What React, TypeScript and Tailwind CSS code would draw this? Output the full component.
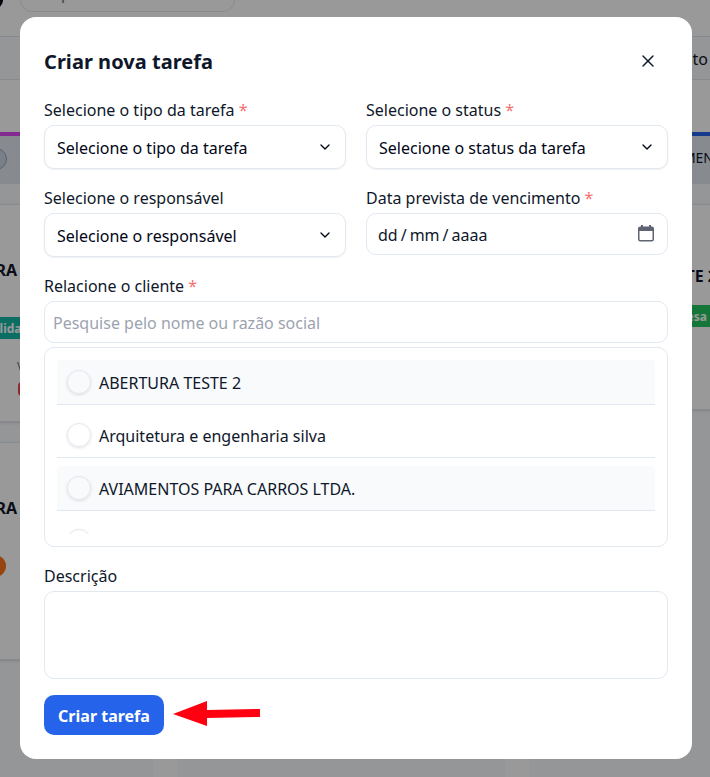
import React from "react";
import { X, ChevronDown } from "lucide-react";

const Label = ({ children, required }: { children: React.ReactNode; required?: boolean }) => (
  <label className="mb-[3px] block h-6 text-base leading-6 text-[#0f172a]">
    {children}
    {required && <span className="text-[#f87171]"> *</span>}
  </label>
);

const SelectBox = ({ text }: { text: string }) => (
  <button className="flex h-11 w-full items-center justify-between rounded-[10px] border border-[#e2e8f0] bg-white px-3 text-base text-[#020617] shadow-[0_1px_2px_rgba(0,0,0,0.06)]">
    <span className="pt-0.5">{text}</span>
    <ChevronDown className="h-4 w-4 text-[#020617]" strokeWidth={2} />
  </button>
);

const CalendarIcon = () => (
  <svg width="16" height="17" viewBox="0 0 16 17" className="mb-0.5 mr-[5px]">
    <rect x="3" y="0" width="2" height="3" fill="#5f6473" />
    <rect x="11" y="0" width="2" height="3" fill="#5f6473" />
    <rect x="0.75" y="2.25" width="14.5" height="13.5" rx="1.5" fill="none" stroke="#5f6473" strokeWidth="1.5" />
    <rect x="0.5" y="2" width="15" height="4" rx="1" fill="#5f6473" />
  </svg>
);

const Client = ({ name, shaded }: { name: string; shaded?: boolean }) => (
  <div className={`mb-2 flex h-[45px] shrink-0 items-center gap-2 rounded-t border-b border-[#e2e8f0] pl-2.5 ${shaded ? "bg-[#f8fafc]" : "bg-white"}`}>
    <span className="h-6 w-6 rounded-full border border-[#e2e8f0] shadow-[0_1px_3px_rgba(0,0,0,0.12)]" />
    <span className="pt-0.5 text-base leading-6 text-[#0f172a]">{name}</span>
  </div>
);

const Board = () => (
  <div className="h-screen overflow-hidden bg-white">
    <div className="flex h-9 items-start">
      <div className="-mt-2 -ml-3 h-4 w-[15px] shrink-0 rounded-full bg-[#020617]" />
      <div className="-mt-7 ml-[17px] flex h-10 w-[215px] items-end rounded-xl border border-[#e2e8f0] pb-1.5 pl-2 text-base leading-6 text-[#64748b]">
        Pesquisar
      </div>
    </div>
    <div className="flex h-11 items-center justify-end border-y border-[#e2e8f0] bg-[#f8fafc] pt-0.5 pr-0.5 text-base text-[#0f172a]">
      Vencimento
    </div>
    <div className="-ml-[175px] mt-[52px] flex h-[645px] w-[1032px] gap-6">
      <div className="w-[328px] shrink-0 bg-[#f8fafc]">
        <div className="flex h-[52px] items-center justify-end border-t-4 border-[#d946ef] bg-[#e2e8f0] pr-[146px]">
          <span className="-mt-0.5 h-[22px] w-[22px] rounded-full border border-[#94a3b8] bg-[#cbd5e1]" />
        </div>
        <div className="mt-5 h-[218px] border border-[#e2e8f0] bg-white pt-[53px] pr-[134px] shadow-sm">
          <div className="pr-px text-right text-base leading-6 font-bold text-[#0f172a]">EMPRESA ABERTURA</div>
          <div className="mt-[35px] -mr-3 flex h-[22px] items-center bg-[#14b8a6] pt-0.5 pl-[140px] text-xs font-bold text-white">Modalidade</div>
          <div className="mt-[20px] -mr-[14px] pl-[191px] text-xs leading-4 text-[#64748b]">Ve</div>
          <div className="mt-[7px] -mr-[16px] ml-auto h-[14px] w-4 rounded-sm border-2 border-[#ef4444] bg-[#f87171]" />
        </div>
        <div className="mt-[20px] h-[218px] border border-[#e2e8f0] bg-white pt-[53px] pr-[134px] shadow-sm">
          <div className="pr-px text-right text-base leading-6 font-bold text-[#0f172a]">EMPRESA ABERTURA</div>
          <div className="mt-[35px] mr-[12px] ml-auto h-[22px] w-20 rounded-full bg-[#f97316]" />
        </div>
      </div>
      <div className="w-[328px] shrink-0 bg-[#f8fafc]" />
      <div className="w-[328px] shrink-0 bg-[#f8fafc]">
        <div className="flex h-[52px] items-center border-t-4 border-[#2563eb] bg-[#e2e8f0] pb-1 pl-[83px] text-sm text-[#0f172a]">
          <span className="w-[102px] text-right">ANDAMEN</span>
        </div>
        <div className="mt-5 h-[206px] border border-[#e2e8f0] bg-white pt-[59px] shadow-sm">
          <div className="w-[187px] text-right text-base leading-6 font-bold whitespace-nowrap text-[#0f172a]">ABERTURA TESTE 2</div>
          <div className="mt-[17px] ml-[90px] flex h-[22px] w-[100px] items-center justify-end bg-[#22c55e] pt-px pr-[13px] text-xs font-bold text-white">Empresa</div>
        </div>
      </div>
    </div>
  </div>
);

export default function App() {
  return (
    <div className="h-screen overflow-hidden font-['Noto_Sans',sans-serif]">
      <Board />
      <div className="fixed inset-0 bg-black/40 pt-[17px] pl-5">
        <div className="flex h-[742px] w-[672px] flex-col rounded-2xl bg-white p-6">
          <div className="flex h-10 items-center justify-between">
            <h2 className="pt-0.5 text-xl leading-7 font-bold tracking-[0.04px] text-[#0f172a]">Criar nova tarefa</h2>
            <X className="mr-[10px] h-5 w-5 text-[#0f172a]" strokeWidth={1.7} />
          </div>
          <div className="mt-[17px] grid grid-cols-2 gap-x-5 gap-y-[17px]">
            <div>
              <Label required>Selecione o tipo da tarefa</Label>
              <SelectBox text="Selecione o tipo da tarefa" />
            </div>
            <div>
              <Label required>Selecione o status</Label>
              <SelectBox text="Selecione o status da tarefa" />
            </div>
            <div>
              <Label>Selecione o responsável</Label>
              <SelectBox text="Selecione o responsável" />
            </div>
            <div>
              <Label required>Data prevista de vencimento</Label>
              <div className="flex h-[42px] items-center justify-between rounded-[10px] border border-[#e2e8f0] px-2 pl-[11px] text-base text-[#0f172a]">
                <span className="flex gap-[3px] pt-0.5"><span>dd</span><span>/</span><span>mm</span><span>/</span><span>aaaa</span></span>
                <CalendarIcon />
              </div>
            </div>
          </div>
          <div className="mt-[17px]">
            <Label required>Relacione o cliente</Label>
            <input
              className="block h-[42px] w-full rounded-[10px] border border-[#e2e8f0] px-2 pt-0.5 text-base placeholder:text-[#9ca3af]"
              placeholder="Pesquise pelo nome ou razão social"
            />
            <div className="mt-1 h-[200px] rounded-[10px] border border-[#e2e8f0] p-3">
              <div className="flex h-[174px] flex-col overflow-hidden">
                <Client name="ABERTURA TESTE 2" shaded />
                <Client name="Arquitetura e engenharia silva" />
                <Client name="AVIAMENTOS PARA CARROS LTDA." shaded />
                <Client name="" />
              </div>
            </div>
          </div>
          <div className="mt-[17px]">
            <Label>Descrição</Label>
            <textarea className="block h-[88px] w-full resize-none rounded-[10px] border border-[#e2e8f0]" />
          </div>
          <div className="mt-4 flex h-10 shrink-0 items-center">
            <button className="h-10 w-[120px] rounded-[10px] bg-[#2563eb] pt-0.5 text-base font-bold text-white">Criar tarefa</button>
            <svg width="88" height="28" viewBox="0 0 88 28" className="ml-[9px] -mt-0.5">
              <path d="M0 14 34 1V10L87 9V17L34 18V26Z" fill="#ff0010" />
            </svg>
          </div>
        </div>
      </div>
    </div>
  );
}
